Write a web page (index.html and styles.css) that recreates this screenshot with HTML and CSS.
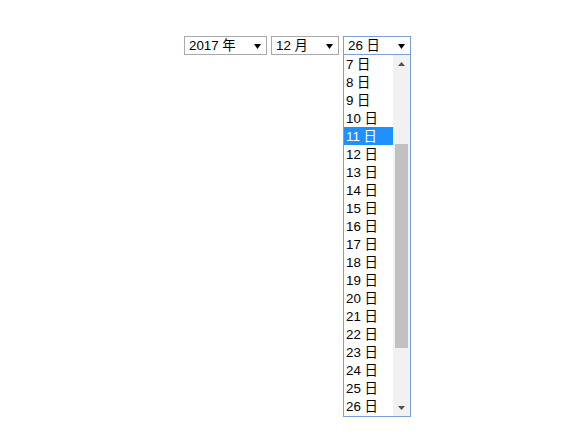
FILE: index.html
```html
<!DOCTYPE html>
<html lang="zh">
<head>
<meta charset="utf-8">
<title>日期选择</title>
<link rel="stylesheet" href="styles.css">
</head>
<body>
<div class="row">
  <div class="sel sel-year"><span class="val">2017 年</span><svg class="arr" width="7" height="5" viewBox="0 0 7 5"><polygon points="0,0 7,0 3.5,5" fill="#000"/></svg></div>
  <div class="sel sel-month"><span class="val">12 月</span><svg class="arr" width="7" height="5" viewBox="0 0 7 5"><polygon points="0,0 7,0 3.5,5" fill="#000"/></svg></div>
  <div class="daycol">
    <div class="sel sel-day focused"><span class="val">26 日</span><svg class="arr" width="7" height="5" viewBox="0 0 7 5"><polygon points="0,0 7,0 3.5,5" fill="#000"/></svg></div>
    <div class="dropdown">
      <div class="list">
        <div class="opt">7 日</div><div class="opt">8 日</div><div class="opt">9 日</div><div class="opt">10 日</div><div class="opt hl">11 日</div>
        <div class="opt">12 日</div><div class="opt">13 日</div><div class="opt">14 日</div><div class="opt">15 日</div><div class="opt">16 日</div>
        <div class="opt">17 日</div><div class="opt">18 日</div><div class="opt">19 日</div><div class="opt">20 日</div><div class="opt">21 日</div>
        <div class="opt">22 日</div><div class="opt">23 日</div><div class="opt">24 日</div><div class="opt">25 日</div><div class="opt">26 日</div>
      </div>
      <div class="sbar">
        <div class="sbtn"><svg width="7" height="4" viewBox="0 0 7 4"><polygon points="0,4 7,4 3.5,0" fill="#505050"/></svg></div>
        <div class="track"><div class="thumb"></div></div>
        <div class="sbtn"><svg width="7" height="4" viewBox="0 0 7 4"><polygon points="0,0 7,0 3.5,4" fill="#505050"/></svg></div>
      </div>
    </div>
  </div>
</div>
</body>
</html>
```
FILE: styles.css
```css
html, body {
  margin: 0;
  padding: 0;
  background: #fff;
}
body {
  font-family: "Liberation Sans", Arial, "Noto Sans CJK SC", sans-serif;
  font-size: 13.333px;
  color: #000;
}
.row {
  display: flex;
  align-items: flex-start;
  gap: 4px;
  padding: 36px 0 0 184px;
}
.sel {
  box-sizing: border-box;
  height: 19px;
  border: 1px solid #a9a9a9;
  display: flex;
  align-items: center;
  justify-content: space-between;
  padding: 1px 5px 0 4px;
  line-height: 16px;
  white-space: nowrap;
}
.sel-year { width: 83px; }
.sel-month { width: 68px; }
.daycol {
  width: 68px;
  display: flex;
  flex-direction: column;
}
.sel-day { width: 68px; }
.focused {
  border-color: #7b9fdb;
}
.arr {
  display: block;
}
.dropdown {
  width: 68px;
  height: 362px;
  box-sizing: border-box;
  border: 1px solid #7b9fdb;
  border-top: none;
  background: #fff;
  display: flex;
}
.list {
  flex: 1;
}
.opt {
  box-sizing: border-box;
  height: 18px;
  padding: 2px 0 0 2px;
  line-height: 16px;
  white-space: nowrap;
}
.opt.hl {
  background: #1e90ff;
  color: #fff;
}
.sbar {
  width: 17px;
  background: #f1f1f1;
  display: flex;
  flex-direction: column;
}
.sbtn {
  height: 17px;
  display: flex;
  align-items: center;
  justify-content: center;
}
.track {
  flex: 1;
}
.thumb {
  margin: 72px 0 0 2px;
  width: 13px;
  height: 204px;
  background: #c1c1c1;
}
```
